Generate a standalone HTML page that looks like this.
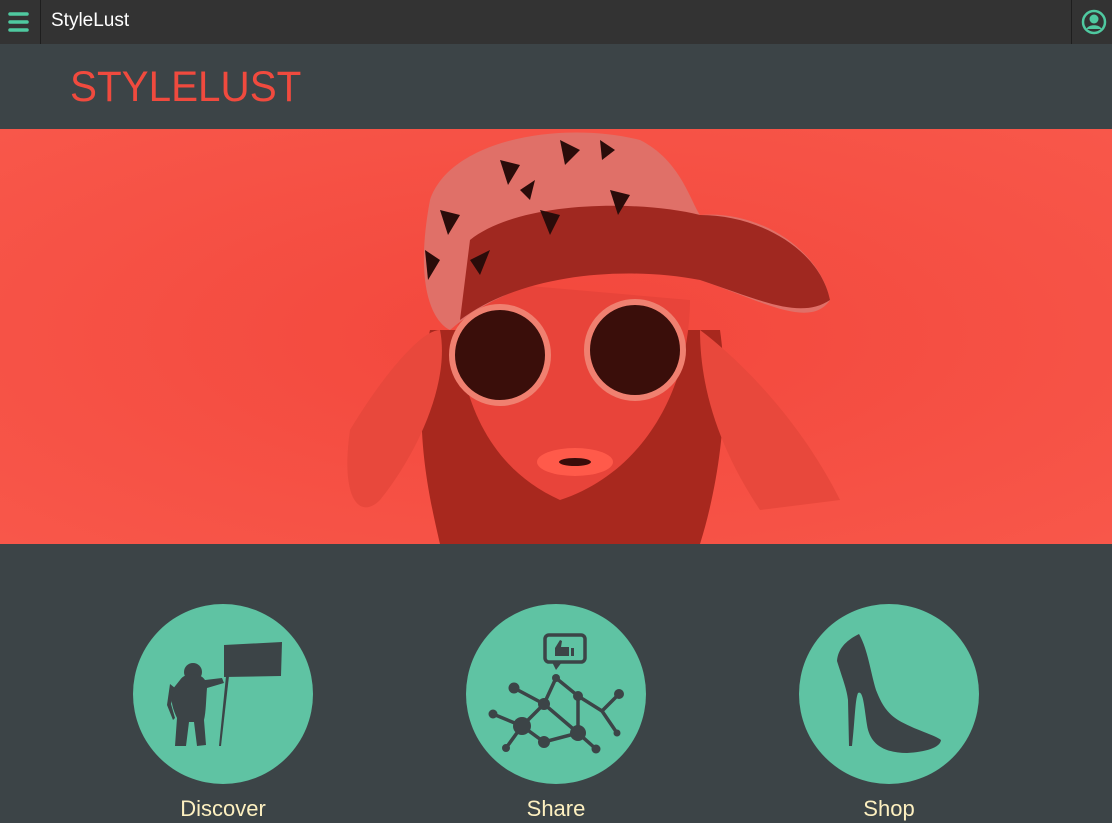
<!DOCTYPE html>
<html><head><meta charset="utf-8"><style>
*{margin:0;padding:0;box-sizing:border-box}
body{width:1112px;height:823px;overflow:hidden;background:#3c4447;font-family:"Liberation Sans",sans-serif;position:relative}
.top{position:absolute;left:0;top:0;width:1112px;height:44px;background:#333333}
.sep{position:absolute;top:0;width:1px;height:44px;background:#1e1e1e}
.brand{position:absolute;left:51px;top:10px;color:#fff;font-size:19px}
.logo{position:absolute;left:70px;top:63px;color:#f04a3e;font-size:43px;letter-spacing:0;transform:scaleX(0.94);transform-origin:left}
.hero{position:absolute;left:0;top:129px;width:1112px;height:415px;overflow:hidden;background:#f4493e}
.lbl{position:absolute;top:796px;color:#fdf0c0;font-size:22px;text-align:center;width:180px}
</style></head><body>
<div class="top"></div>
<svg style="position:absolute;left:8px;top:11px" width="22" height="22"><g stroke="#4fc9a0" stroke-width="3.5" stroke-linecap="round"><line x1="2" y1="3" x2="19" y2="3"/><line x1="2" y1="11" x2="19" y2="11"/><line x1="2" y1="19" x2="19" y2="19"/></g></svg>
<div class="sep" style="left:40px"></div>
<div class="sep" style="left:1071px"></div>
<div class="brand">StyleLust</div>
<svg style="position:absolute;left:1080px;top:8px" width="28" height="28"><circle cx="14" cy="14" r="11" fill="none" stroke="#4fc9a0" stroke-width="2.5"/><circle cx="14" cy="11" r="4.5" fill="#4fc9a0"/><path d="M6.5 21 C8 16 20 16 21.5 21 Z" fill="#4fc9a0"/></svg>
<div class="logo">STYLELUST</div>
<div class="hero">
<svg width="1112" height="415" viewBox="0 129 1112 415">
<defs><radialGradient id="bg" cx="0.5" cy="0.5" r="0.7"><stop offset="0" stop-color="#f2473c"/><stop offset="1" stop-color="#f8574a"/></radialGradient></defs>
<rect x="0" y="129" width="1112" height="415" fill="url(#bg)"/>
<path d="M430 330 C410 420 430 500 440 544 L700 544 C720 480 730 400 720 330 Z" fill="#a8281e"/>
<path d="M460 280 C450 360 470 460 560 500 C650 470 690 380 690 300 Z" fill="#e8443a"/>
<path d="M430 200 C450 140 560 120 640 140 C680 160 690 200 700 215 C760 210 820 250 830 300 C810 330 760 300 700 280 C620 260 520 270 450 330 C430 320 415 280 430 200 Z" fill="#e07068"/>
<path d="M470 240 C520 200 640 200 700 215 C760 215 820 250 830 300 C800 320 760 300 700 280 C620 265 520 275 460 320 Z" fill="#a02820"/>
<g fill="#2a0c0a"><polygon points="440,210 460,215 448,235"/><polygon points="500,160 520,165 508,185"/><polygon points="560,140 580,150 565,165"/><polygon points="610,190 630,195 618,215"/><polygon points="470,260 490,250 480,275"/><polygon points="540,210 560,215 550,235"/><polygon points="425,250 440,260 428,280"/><polygon points="600,140 615,150 602,160"/><polygon points="520,190 535,180 530,200"/></g>
<circle cx="500" cy="355" r="48" fill="#3a0e0a" stroke="#f08070" stroke-width="6"/>
<circle cx="635" cy="350" r="48" fill="#3a0e0a" stroke="#f08070" stroke-width="6"/>
<ellipse cx="575" cy="462" rx="38" ry="14" fill="#ff5a4a"/>
<ellipse cx="575" cy="462" rx="16" ry="4" fill="#3a0c0a"/>
<path d="M350 430 C380 380 420 330 440 330 C450 380 420 450 380 500 C360 520 340 500 350 430Z" fill="#e8483c"/>
<path d="M700 330 C740 360 800 420 840 500 L760 510 C720 450 700 390 700 330Z" fill="#e8483c"/>
</svg>
</div>
<svg style="position:absolute;left:0;top:590px" width="1112" height="210" viewBox="0 590 1112 210">
<circle cx="223" cy="694" r="90" fill="#5fc3a3"/>
<circle cx="556" cy="694" r="90" fill="#5fc3a3"/>
<circle cx="889" cy="694" r="90" fill="#5fc3a3"/>
<g fill="#3c4447">
<polygon points="224,645 282,642 281,676 224,677"/>
<polygon points="226,676 229,676 221,746 219,746"/>
<circle cx="193" cy="672" r="9"/>
<path d="M180 680 C185 672 200 672 205 680 L222 678 L224 683 L207 688 C206 700 206 712 204 720 L206 745 L197 746 L194 722 L189 722 L186 746 L175 746 L177 718 C173 710 170 700 172 690 Z"/>
<path d="M170 684 L167 705 L173 720 L175 718 L171 704 L175 688Z"/>
</g>
<g stroke="#3c4447" stroke-width="3.5" fill="none" stroke-linecap="round">
<rect x="545" y="635" width="40" height="27" rx="4"/>
<polyline points="514,688 544,704 556,678 578,696 602,711 619,694"/>
<polyline points="493,714 522,726 544,704 578,733 596,749"/>
<polyline points="506,748 522,726 544,742 578,733 578,696"/>
<line x1="602" y1="711" x2="617" y2="733"/>
</g>
<g fill="#3c4447">
<path d="M552 662 L562 662 L556 670Z"/>
<circle cx="514" cy="688" r="5.5"/><circle cx="493" cy="714" r="4.5"/><circle cx="522" cy="726" r="9"/><circle cx="544" cy="704" r="6"/><circle cx="556" cy="678" r="4"/><circle cx="578" cy="696" r="5"/><circle cx="619" cy="694" r="5"/><circle cx="617" cy="733" r="3.5"/><circle cx="578" cy="733" r="8"/><circle cx="544" cy="742" r="6"/><circle cx="596" cy="749" r="4.5"/><circle cx="506" cy="748" r="4"/>
<path d="M555 648 L560 640 L562 641 L561 647 L569 647 L569 656 L555 656Z"/><rect x="571" y="648" width="3" height="8"/>
</g>
<path fill="#3c4447" d="M859 634 C847 640 838 648 837 661 C843 680 847 690 848 700 L849 746 L852 746 C855 720 855 700 858 693 C863 690 864 705 867 725 C870 745 885 753 907 753 C925 752 940 748 941 740 C935 735 915 730 898 720 C885 712 880 700 876 690 C870 670 868 650 859 634 Z"/>
</svg>
<div class="lbl" style="left:133px">Discover</div>
<div class="lbl" style="left:466px">Share</div>
<div class="lbl" style="left:799px">Shop</div>
</body></html>
